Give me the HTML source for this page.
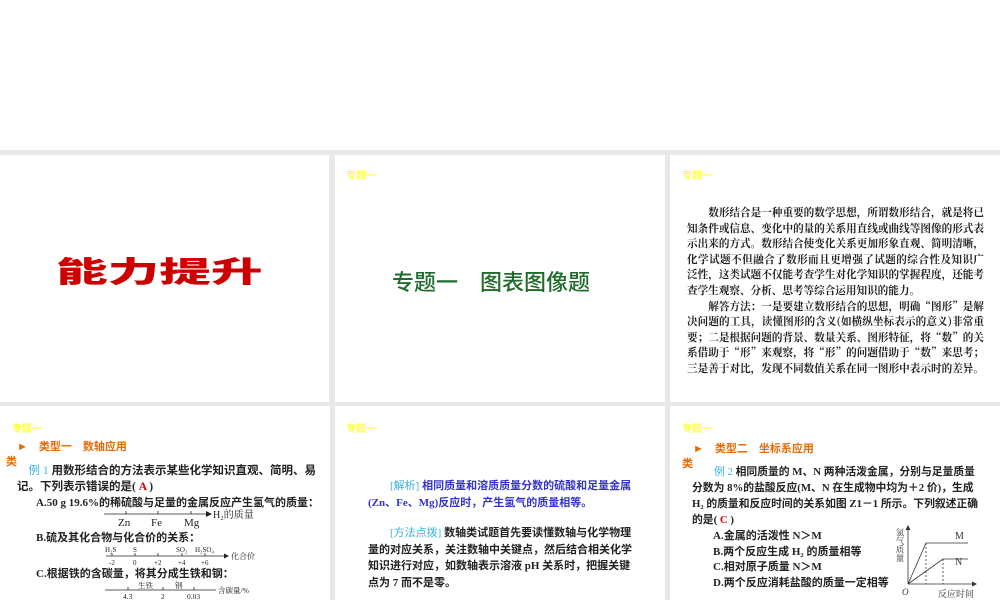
<!DOCTYPE html>
<html><head><meta charset="utf-8"><style>
*{margin:0;padding:0;box-sizing:border-box}
body{width:1000px;height:600px;background:#fff;position:relative;overflow:hidden;font-family:"Liberation Serif","Noto Serif CJK SC",serif;color:#111}
.band{position:absolute;left:0;top:150px;width:1000px;height:450px;background:#e8e8e8}
.s{position:absolute;background:#fff;overflow:hidden}
.a{position:absolute;white-space:nowrap}
.zt{position:absolute;color:#ffff44;font:bold 10px "Liberation Sans","Noto Sans CJK SC",sans-serif}
.p3{font-family:"Noto Serif CJK SC",serif;font-size:10.6px;font-weight:bold;color:#222;width:297px}
.p3 div{height:15.6px;line-height:15.6px;text-align:justify;text-align-last:justify;white-space:nowrap;overflow:hidden}
.t{font-size:11px;font-weight:bold;font-family:"Liberation Serif","Noto Sans CJK SC",sans-serif;color:#222}
.or{color:#e36c09;font:bold 11px "Liberation Sans","Noto Sans CJK SC",sans-serif}
.bl{color:#33c;}
.cy{color:#3ab0e0;font-weight:normal}
.red{color:#d00}
</style></head><body>
<div class="band"></div>
<!-- row 1 -->
<div class="s" style="left:0;top:155px;width:329px;height:247px">
 <div class="a" style="left:56px;top:94px;font:900 29px 'Noto Sans CJK SC',sans-serif;color:#c00;transform:scaleX(1.78);transform-origin:left top">能力提升</div>
</div>
<div class="s" style="left:335px;top:155px;width:330px;height:247px">
 <div class="zt" style="left:11px;top:12px">专题一</div>
 <div class="a" style="left:57px;top:110px;font:500 22px 'Noto Sans CJK SC',sans-serif;color:#1e6b2a">专题一　图表图像题</div>
</div>
<div class="s" style="left:670px;top:155px;width:330px;height:247px">
 <div class="zt" style="left:12px;top:12px">专题一</div>
 <div class="a p3" style="left:17px;top:50px">
 <div>　　数形结合是一种重要的数学思想，所谓数形结合，就是将已</div>
 <div>知条件或信息、变化中的量的关系用直线或曲线等图像的形式表</div>
 <div>示出来的方式。数形结合使变化关系更加形象直观、简明清晰，</div>
 <div>化学试题不但融合了数形而且更增强了试题的综合性及知识广</div>
 <div>泛性，这类试题不仅能考查学生对化学知识的掌握程度，还能考</div>
 <div style="text-align-last:left">查学生观察、分析、思考等综合运用知识的能力。</div>
 <div>　　解答方法：一是要建立数形结合的思想，明确“图形”是解</div>
 <div>决问题的工具，读懂图形的含义(如横纵坐标表示的意义)非常重</div>
 <div>要；二是根据问题的背景、数量关系、图形特征，将“数”的关</div>
 <div>系借助于“形”来观察，将“形”的问题借助于“数”来思考；</div>
 <div>三是善于对比，发现不同数值关系在同一图形中表示时的差异。</div>
 </div>
</div>
<!-- row 2 -->
<div class="s" style="left:0;top:406px;width:330px;height:194px">
 <div class="zt" style="left:12px;top:14px">专题一</div>
 <div class="a or" style="left:17px;top:32px">►　类型一　数轴应用</div>
 <div class="a or" style="left:6px;top:47px">类</div>
 <div class="a t" style="left:17px;top:57px;line-height:16px;font-size:11.5px">　<span class="cy">例 1</span> 用数形结合的方法表示某些化学知识直观、简明、易<br>记。下列表示错误的是( <span class="red">A</span> )</div>
 <div class="a t" style="left:36px;top:88px">A.50 g 19.6%的稀硫酸与足量的金属反应产生氢气的质量：</div>
 <div class="a t" style="left:36px;top:123px">B.硫及其化合物与化合价的关系：</div>
 <div class="a t" style="left:36px;top:159px">C.根据铁的含碳量，将其分成生铁和钢：</div>
 <svg class="a" style="left:0;top:0" width="330" height="194" font-family="Liberation Serif,Noto Serif CJK SC,serif" fill="#222">
  <g stroke="#222" stroke-width="0.8">
   <line x1="104" y1="108" x2="206" y2="108"/><line x1="126" y1="105" x2="126" y2="108"/><line x1="158" y1="105" x2="158" y2="108"/><line x1="191" y1="105" x2="191" y2="108"/>
   <line x1="106" y1="150" x2="224" y2="150"/><line x1="112" y1="147" x2="112" y2="150"/><line x1="135" y1="147" x2="135" y2="150"/><line x1="158" y1="147" x2="158" y2="150"/><line x1="182" y1="147" x2="182" y2="150"/><line x1="205" y1="147" x2="205" y2="150"/>
   <line x1="105" y1="184" x2="216" y2="184"/><line x1="128" y1="181" x2="128" y2="184"/><line x1="163" y1="181" x2="163" y2="184"/><line x1="194" y1="181" x2="194" y2="184"/>
  </g>
  <polygon points="206,105 212,108 206,111"/><polygon points="224,147.5 229,150 224,152.5"/>
  <text x="118" y="120" font-size="11">Zn</text><text x="151" y="120" font-size="11">Fe</text><text x="184" y="120" font-size="11">Mg</text>
  <text x="213" y="112" font-size="10">H₂的质量</text>
  <g font-size="7"><text x="105" y="146">H₂S</text><text x="133" y="146">S</text><text x="176" y="146">SO₂</text><text x="195" y="146">H₂SO₄</text>
  <text x="109" y="159">-2</text><text x="133" y="159">0</text><text x="154" y="159">+2</text><text x="178" y="159">+4</text><text x="201" y="159">+6</text></g>
  <text x="231" y="153" font-size="8">化合价</text>
  <g font-size="7.5"><text x="138" y="182">生铁</text><text x="175" y="182">钢</text><text x="123" y="193">4.3</text><text x="161" y="193">2</text><text x="187" y="193">0.03</text><text x="218" y="187">含碳量/%</text></g>
 </svg>
</div>
<div class="s" style="left:335px;top:406px;width:330px;height:194px">
 <div class="zt" style="left:11px;top:14px">专题一</div>
 <div class="a t bl" style="left:33px;top:72px;line-height:17px"><span style="margin-left:22px" class="cy">[解析]</span> 相同质量和溶质质量分数的硫酸和足量金属<br>(Zn、Fe、Mg)反应时，产生氢气的质量相等。</div>
 <div class="a t" style="left:33px;top:119px;line-height:16.5px"><span style="margin-left:22px" class="cy">[方法点拨]</span> 数轴类试题首先要读懂数轴与化学物理<br>量的对应关系，关注数轴中关键点，然后结合相关化学<br>知识进行对应，如数轴表示溶液 pH 关系时，把握关键<br>点为 7 而不是零。</div>
</div>
<div class="s" style="left:670px;top:406px;width:330px;height:194px">
 <div class="zt" style="left:12px;top:14px">专题一</div>
 <div class="a or" style="left:23px;top:34px">►　类型二　坐标系应用</div>
 <div class="a or" style="left:12px;top:49px">类</div>
 <div class="a t" style="left:22px;top:58px;line-height:16px;font-size:10.8px"><span style="margin-left:22px" class="cy">例 2</span> 相同质量的 M、N 两种活泼金属，分别与足量质量<br>分数为 8%的盐酸反应(M、N 在生成物中均为＋2 价)，生成<br>H₂ 的质量和反应时间的关系如图 Z1－1 所示。下列叙述正确<br>的是( <span class="red">C</span> )</div>
 <div class="a t" style="left:43px;top:123px;line-height:15.7px">A.金属的活泼性 N＞M<br>B.两个反应生成 H₂ 的质量相等<br>C.相对原子质量 N＞M<br>D.两个反应消耗盐酸的质量一定相等</div>
 <svg class="a" style="left:0;top:0" width="330" height="194" fill="#333" font-family="Liberation Serif,Noto Serif CJK SC,serif">
  <g stroke="#333" stroke-width="0.8" fill="none">
   <line x1="238" y1="178" x2="238" y2="124"/><line x1="238" y1="178" x2="302" y2="178"/>
   <polyline points="238,178 256,137 298,137"/><polyline points="238,178 273,153 298,153"/>
   <line x1="256" y1="137" x2="256" y2="178" stroke-dasharray="2,2"/><line x1="273" y1="153" x2="273" y2="178" stroke-dasharray="2,2"/>
  </g>
  <polygon points="235.5,124 238,119 240.5,124"/><polygon points="302,175.5 307,178 302,180.5"/>
  <text x="285" y="133" font-size="10">M</text><text x="285" y="159" font-size="10">N</text>
  <text x="232" y="189" font-size="9" font-style="italic">O</text><text x="268" y="191" font-size="9">反应时间</text>
  <text font-size="8.5" writing-mode="tb" x="230" y="122">氢气质量</text>
 </svg>
</div>
</body></html>
